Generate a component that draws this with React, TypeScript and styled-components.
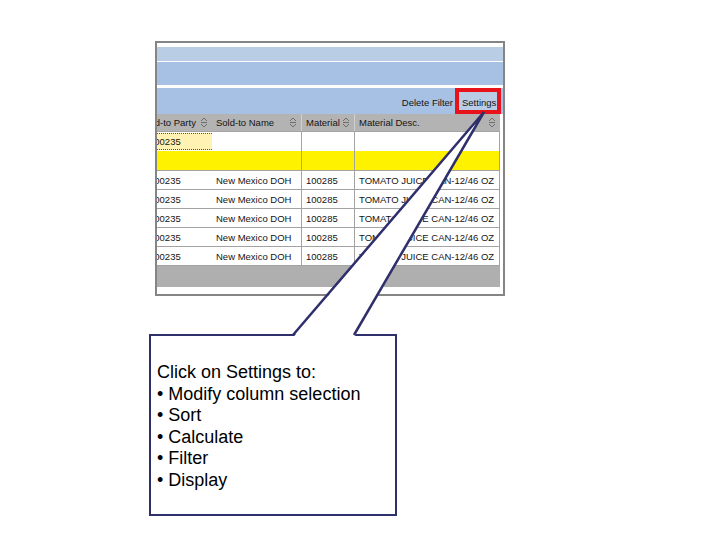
import styled, { createGlobalStyle } from "styled-components";

const GlobalStyle = createGlobalStyle`
  html, body {
    margin: 0;
    padding: 0;
    background: #ffffff;
  }
  body {
    font-family: "Liberation Sans", Arial, sans-serif;
  }
`;

const Page = styled.div`
  position: relative;
  width: 720px;
  height: 540px;
  overflow: hidden;
  display: flex;
  flex-direction: column;
  align-items: flex-start;
`;

const Panel = styled.div`
  margin: 41px 0 0 155px;
  width: 346px;
  height: 251px;
  border: 2px solid #858585;
  background: #ffffff;
  display: flex;
  flex-direction: column;
  overflow: hidden;
  font-size: 9.5px;
  color: #141414;
`;

const Band = styled.div<{ $h: number; $bg: string; $gap: number }>`
  height: ${(p) => p.$h}px;
  margin-top: ${(p) => p.$gap}px;
  background: ${(p) => p.$bg};
  flex-shrink: 0;
`;

const Toolbar = styled.div`
  margin-top: 3px;
  height: 26px;
  background: #a6c1e4;
  display: flex;
  justify-content: flex-end;
  align-items: stretch;
  padding-right: 2px;
  flex-shrink: 0;
`;

const ToolLink = styled.span`
  display: flex;
  align-items: center;
  padding: 3px 2px 0 0;
`;

const SettingsBox = styled.span`
  display: flex;
  align-items: center;
  padding: 3px 2px 0 3px;
  border: 4px solid #e8121b;
  background: #b9cde6;
  box-sizing: border-box;
  width: 46px;
`;

const Table = styled.div`
  width: 343px;
  display: flex;
  flex-direction: column;
`;

const Row = styled.div<{ $h: number; $bg?: string; $line?: boolean }>`
  display: grid;
  grid-template-columns: 55px 89px 53px 146px;
  height: ${(p) => p.$h}px;
  background: ${(p) => p.$bg || "#ffffff"};
  border-bottom: ${(p) => (p.$line ? "1px solid #a3a3a3" : "none")};
  box-sizing: border-box;
  flex-shrink: 0;
`;

const Cell = styled.div<{ $sep?: boolean; $last?: boolean; $pad?: number; $padR?: number }>`
  display: flex;
  align-items: center;
  overflow: hidden;
  white-space: nowrap;
  padding-left: ${(p) => p.$pad ?? 4}px;
  padding-right: ${(p) => p.$padR ?? 4}px;
  border-left: ${(p) => (p.$sep ? "1px solid #a3a3a3" : "none")};
  border-right: ${(p) => (p.$last ? "1px solid #a3a3a3" : "none")};
`;

const HeadCell = styled(Cell)`
  justify-content: space-between;
  border-color: #d0d0d0;
`;

const Clipped = styled.span<{ $shift: number }>`
  margin-left: ${(p) => p.$shift}px;
`;

const FilterInput = styled.div`
  width: 55px;
  height: 15px;
  background: #fff2b3;
  border-top: 1px dotted #555;
  border-bottom: 1px dotted #555;
  display: flex;
  align-items: center;
  overflow: hidden;
`;

const Footer = styled.div`
  height: 21px;
  width: 343px;
  background: #afafaf;
  flex-shrink: 0;
`;

const Callout = styled.div`
  margin: 38px 0 0 149px;
  width: 248px;
  height: 182px;
  box-sizing: border-box;
  border: 2px solid #2f2f6c;
  padding: 26px 0 0 6px;
  font-size: 18px;
  line-height: 21.6px;
  color: #000;
  background: #fff;
`;

const Tail = styled.svg`
  position: absolute;
  left: 0;
  top: 0;
  pointer-events: none;
`;

const SortIcon = () => (
  <svg width="8" height="11" viewBox="0 0 8 11" style={{ flexShrink: 0 }}>
    <path
      d="M1 4 L4 1 L7 4 M1 5.5 H7 M1 7 L4 10 L7 7"
      fill="none"
      stroke="#666"
      strokeWidth="0.9"
    />
  </svg>
);

const rows = [1, 2, 3, 4, 5];
const items = ["Modify column selection", "Sort", "Calculate", "Filter", "Display"];

export default function App() {
  return (
    <Page>
      <GlobalStyle />
      <Panel>
        <Band $h={14} $bg="#b9cde5" $gap={4} />
        <Band $h={23} $bg="#a6c1e4" $gap={1} />
        <Toolbar>
          <ToolLink>Delete Filter</ToolLink>
          <SettingsBox>Settings</SettingsBox>
        </Toolbar>
        <Table>
          <Row $h={18} $bg="#b3b3b3" $line>
            <HeadCell $pad={0}>
              <Clipped $shift={-16}>Sold-to Party</Clipped>
              <SortIcon />
            </HeadCell>
            <HeadCell>
              Sold-to Name
              <SortIcon />
            </HeadCell>
            <HeadCell $sep>
              Material
              <SortIcon />
            </HeadCell>
            <HeadCell $sep>
              Material Desc.
              <SortIcon />
            </HeadCell>
          </Row>
          <Row $h={19}>
            <Cell $pad={0} $padR={0}>
              <FilterInput>
                <Clipped $shift={-8}>100235</Clipped>
              </FilterInput>
            </Cell>
            <Cell />
            <Cell $sep />
            <Cell $sep $last />
          </Row>
          <Row $h={20} $bg="#fff200" $line>
            <Cell />
            <Cell />
            <Cell $sep />
            <Cell $sep $last />
          </Row>
          {rows.map((r) => (
            <Row key={r} $h={19} $line>
              <Cell $pad={0}>
                <Clipped $shift={-8}>100235</Clipped>
              </Cell>
              <Cell>New Mexico DOH</Cell>
              <Cell $sep>100285</Cell>
              <Cell $sep $last>TOMATO JUICE CAN-12/46 OZ</Cell>
            </Row>
          ))}
        </Table>
        <Footer />
      </Panel>
      <Callout>
        <div>Click on Settings to:</div>
        {items.map((t) => (
          <div key={t}>• {t}</div>
        ))}
      </Callout>
      <Tail width="720" height="540" viewBox="0 0 720 540">
        <polygon points="293,337.5 484,112 354,337.5" fill="#ffffff" />
        <polyline
          points="293,335 484,112 354,335"
          fill="none"
          stroke="#2f2f6c"
          strokeWidth="2.5"
          strokeLinejoin="miter"
        />
      </Tail>
    </Page>
  );
}
